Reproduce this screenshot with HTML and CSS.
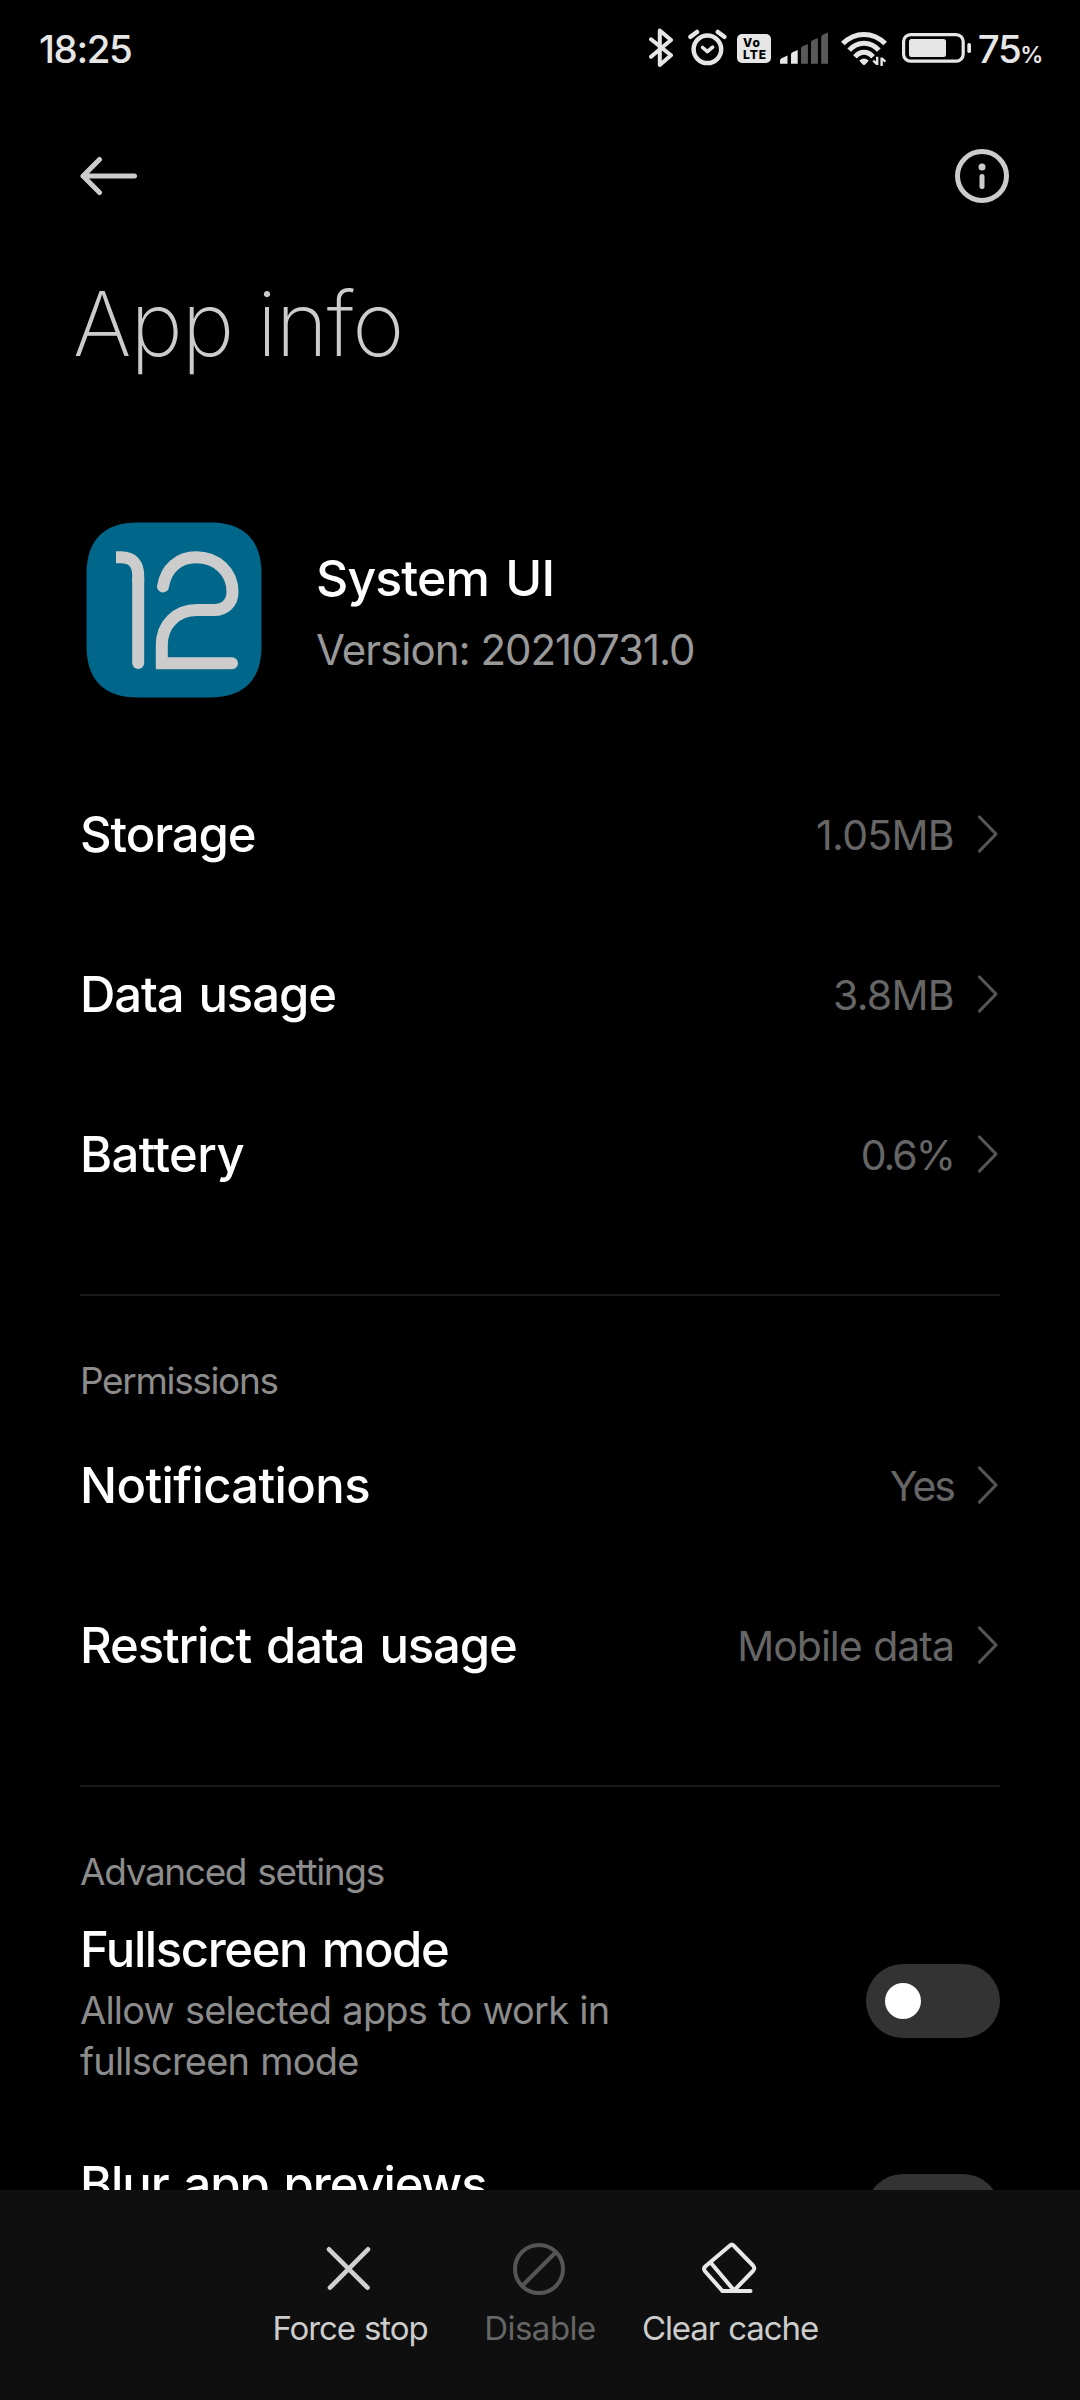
FILE: index.html
```html
<!DOCTYPE html>
<html lang="en">
<head>
    <meta charset="UTF-8">
    <meta name="viewport" content="width=device-width, initial-scale=1.0">
    <title>App info</title>
    <link rel="stylesheet" href="styles.css">
</head>
<body>
    <div class="screen">
        <div class="status-bar">
            <span class="clock">18:25</span>
            <div class="status-icons">
                <svg class="bluetooth" width="24" height="48" viewBox="0 0 24 48">
                    <path d="M2 15.3 L22 31.3 L10.8 41 V6.5 L22 16 L2 32.7" fill="none" stroke="#e6e6e6" stroke-width="4" stroke-linecap="round" stroke-linejoin="round"/>
                </svg>
                <svg class="alarm" width="39" height="48" viewBox="0 0 39 48" fill="none" stroke="#e6e6e6" stroke-width="4.5" stroke-linecap="round">
                    <circle cx="19.4" cy="25.3" r="13.8"/>
                    <path d="M2.5 12.8 L9 8 M29.8 8 L36.3 12.8"/>
                    <path d="M14.6 23.5 L19.4 27.6 L24.6 23.2" stroke-width="3.6" stroke-linejoin="round"/>
                </svg>
                <svg class="volte" width="34" height="48" viewBox="0 0 34 48">
                    <rect x="0" y="10" width="34" height="29" rx="5" fill="#e6e6e6"/>
                    <text x="6" y="22.8" textLength="17">Vo</text>
                    <text x="6" y="35.4" textLength="23">LTE</text>
                </svg>
                <svg class="signal" width="48" height="48" viewBox="0 0 48 48">
                    <path d="M0 39.7 V36.5 Q0 35 1.5 34.3 L7.5 31.5 V39.7 Z M11 39.7 V30.5 Q11 29 12.5 28.2 L17.7 26 V39.7 Z" fill="#e6e6e6"/>
                    <path d="M21 39.7 V24.5 Q21 23 22.5 22.2 L27.9 20 V39.7 Z M31 39.7 V18.5 Q31 17 32.5 16.2 L37.9 14 V39.7 Z M41.2 39.7 V13 Q41.2 11.5 42.7 10.7 L48 8.5 V39.7 Z" fill="#595959"/>
                </svg>
                <svg class="wifi" width="46" height="48" viewBox="0 0 46 48" fill="none" stroke="#e6e6e6" stroke-width="5">
                    <path d="M1.8 19.6 Q11 10.4 23 10.4 Q35 10.4 44.2 19.6"/>
                    <path d="M8.2 26.2 Q14.5 19.2 23 19.2 Q31.5 19.2 37.8 26.2"/>
                    <path d="M14 32.8 Q18 28.3 23 28.3 Q28 28.3 32 32.8"/>
                    <path d="M18.3 36.8 Q23 32.4 27.7 36.8 L24.2 40.6 Q23 41.6 21.8 40.6 Z" fill="#e6e6e6" stroke="none"/>
                    <path d="M36.2 32.8 V41 M36 40 L32.2 36.6 M40.6 42 V33.6 M40.8 34.4 L44.4 37.6" stroke-width="2.4"/>
                </svg>
                <svg class="battery" width="70" height="48" viewBox="0 0 70 48">
                    <rect x="1.6" y="10.6" width="59.6" height="26.6" rx="7" fill="none" stroke="#e6e6e6" stroke-width="3.2"/>
                    <rect x="7" y="15" width="37" height="18" rx="2.5" fill="#e6e6e6"/>
                    <rect x="65.3" y="19" width="3.7" height="10" rx="1.8" fill="#e6e6e6"/>
                </svg>
                <span class="level">75<span class="percent">%</span></span>
            </div>
        </div>

        <div class="toolbar">
            <svg width="58" height="54" viewBox="0 0 58 54" fill="none" stroke="#cccccc" stroke-width="5" stroke-linecap="round" stroke-linejoin="round">
                <path d="M19.5 10.5 L3 27 L19.5 43.5 M3 27 H54.5"/>
            </svg>
            <svg width="54" height="54" viewBox="0 0 54 54">
                <circle cx="27" cy="27" r="24.5" fill="none" stroke="#cccccc" stroke-width="5"/>
                <circle cx="27" cy="18" r="3.5" fill="#cccccc"/>
                <rect x="24.5" y="25" width="5" height="15" rx="2.5" fill="#cccccc"/>
            </svg>
        </div>

        <h1>App info</h1>

        <div class="app">
            <svg class="app-icon" width="176" height="176" viewBox="0 0 176 176">
                <path d="M0.5 52 C0.5 18 18 0.5 52 0.5 H124 C158 0.5 175.5 18 175.5 52 V124 C175.5 158 158 175.5 124 175.5 H52 C18 175.5 0.5 158 0.5 124 Z" fill="#00668a"/>
                <g fill="none" stroke="#cccccc" stroke-width="12">
                    <path d="M30 35.3 H35 Q52.2 35.3 52.2 54 V60"/>
                    <path d="M52.2 58 V141" stroke-linecap="round"/>
                    <path d="M77 64.5 C80 46 93 35.3 110 35.3 C131 35.3 146.5 50 146.5 70 C146.5 81 139 88 128 88 H111 C90 88 75.8 103 75.8 123 V141.2 H146" stroke-linecap="round"/>
                </g>
            </svg>
            <div class="app-text">
                <div class="app-name">System UI</div>
                <div class="app-version">Version: 20210731.0</div>
            </div>
        </div>

        <div class="section">
            <div class="row">
                <span class="name">Storage</span>
                <span class="value wide">1.05MB</span>
                <svg class="chevron" width="22" height="40" viewBox="0 0 22 40"><path d="M2.5 3 L19 20 L2.5 37"/></svg>
            </div>
            <div class="row">
                <span class="name">Data usage</span>
                <span class="value wide">3.8MB</span>
                <svg class="chevron" width="22" height="40" viewBox="0 0 22 40"><path d="M2.5 3 L19 20 L2.5 37"/></svg>
            </div>
            <div class="row">
                <span class="name loose">Battery</span>
                <span class="value tight">0.6%</span>
                <svg class="chevron" width="22" height="40" viewBox="0 0 22 40"><path d="M2.5 3 L19 20 L2.5 37"/></svg>
            </div>
        </div>

        <div class="section">
            <h2>Permissions</h2>
            <div class="row">
                <span class="name loose">Notifications</span>
                <span class="value tight">Yes</span>
                <svg class="chevron" width="22" height="40" viewBox="0 0 22 40"><path d="M2.5 3 L19 20 L2.5 37"/></svg>
            </div>
            <div class="row">
                <span class="name">Restrict data usage</span>
                <span class="value">Mobile data</span>
                <svg class="chevron" width="22" height="40" viewBox="0 0 22 40"><path d="M2.5 3 L19 20 L2.5 37"/></svg>
            </div>
        </div>

        <div class="section last">
            <h2>Advanced settings</h2>
            <div class="row tall">
                <div class="text">
                    <div class="name snug">Fullscreen mode</div>
                    <div class="summary">Allow selected apps to work in<br>fullscreen mode</div>
                </div>
                <div class="toggle"><div class="knob"></div></div>
            </div>
            <div class="row tall">
                <div class="text">
                    <div class="name">Blur app previews</div>
                    <div class="summary">&nbsp;</div>
                </div>
                <div class="toggle"><div class="knob"></div></div>
            </div>
        </div>

        <div class="bottom-bar">
            <div class="action">
                <svg width="60" height="60" viewBox="0 0 60 60" fill="none" stroke="#d0d0d0" stroke-width="4.6" stroke-linecap="round">
                    <path d="M9 10.3 L47.5 48.7 M48 10.3 L10 48.7"/>
                </svg>
                <span>Force stop</span>
            </div>
            <div class="action disabled">
                <svg width="60" height="60" viewBox="0 0 60 60" fill="none" stroke="#555555" stroke-width="4">
                    <circle cx="29" cy="30" r="24"/>
                    <path d="M46 13 L12 47"/>
                </svg>
                <span>Disable</span>
            </div>
            <div class="action">
                <svg width="60" height="60" viewBox="0 0 60 60" fill="none" stroke="#e8e8e8" stroke-width="4" stroke-linecap="round" stroke-linejoin="round">
                    <path d="M33.5 6.5 L53 26.5 Q55.5 29.3 53 32 L33.5 52 H22.5 L5.2 32.5 Q3 29.7 5.2 27.5 L30 6.5 Q31.8 4.8 33.5 6.5 Z"/>
                    <path d="M11 24 L32.5 49.5 M22.5 52 H50.5"/>
                </svg>
                <span>Clear cache</span>
            </div>
        </div>
    </div>
</body>
</html>
```
FILE: styles.css
```css
* {
    box-sizing: border-box;
}

body {
    margin: 0;
    background: #000;
    color: #fff;
    font-family: Inter, Roboto, sans-serif;
}

.screen {
    display: flex;
    flex-direction: column;
    width: 1080px;
    height: 2400px;
    overflow: hidden;
}

svg {
    display: block;
    flex: none;
}

/* status bar */
.status-bar {
    display: flex;
    justify-content: space-between;
    align-items: center;
    height: 96px;
    padding: 0 38px 0 39px;
    color: #e6e6e6;
    flex: none;
}

.clock {
    padding-top: 1px;
    font-size: 38.5px;
    font-weight: 450;
    letter-spacing: -1.4px;
}

.status-icons {
    display: flex;
    align-items: center;
}

.alarm {
    margin-left: 15px;
}

.volte {
    margin-left: 10px;
    font-size: 12px;
    font-weight: 800;
    fill: #000;
}

.signal {
    margin-left: 9px;
}

.wifi {
    margin-left: 13px;
}

.battery {
    margin-left: 15px;
}

.level {
    margin-left: 6px;
    padding-top: 1px;
    font-size: 38.5px;
    font-weight: 450;
    letter-spacing: -1.4px;
}

.percent {
    font-size: 23px;
    font-weight: 600;
}

/* header */
.toolbar {
    display: flex;
    justify-content: space-between;
    align-items: center;
    height: 160px;
    padding: 0 71px 0 80px;
    flex: none;
}

h1 {
    margin: 13px 0 143px;
    padding-left: 73px;
    font-size: 89px;
    font-weight: 250;
    line-height: 110px;
    letter-spacing: -1.2px;
    color: #ccc;
    flex: none;
}

.app {
    display: flex;
    align-items: center;
    height: 176px;
    margin-bottom: 56px;
    padding-left: 86px;
    flex: none;
}

.app-text {
    padding: 8px 0 0 54px;
}

.app-name {
    font-size: 50px;
    font-weight: 500;
    line-height: 72px;
    letter-spacing: -0.9px;
    word-spacing: 4px;
}

.app-version {
    font-size: 42px;
    line-height: 72px;
    letter-spacing: -1px;
    color: #999;
}

/* preference list */
.section {
    margin: 0 80px;
    padding-bottom: 60px;
    border-bottom: 2px solid #1a1a1a;
    flex: none;
}

.section.last {
    height: 403px;
    padding-bottom: 0;
    border-bottom: none;
    overflow: hidden;
}

h2 {
    margin: 0;
    padding-top: 60px;
    font-size: 37px;
    font-weight: 400;
    line-height: 49px;
    letter-spacing: -1.35px;
    word-spacing: 2px;
    color: #8c8c8c;
}

.row {
    display: flex;
    align-items: center;
    height: 160px;
}

.row.tall {
    height: 210px;
}

.name {
    flex: 1;
    padding-top: 2px;
    font-size: 49px;
    font-weight: 500;
    line-height: 64px;
    letter-spacing: -1.1px;
    word-spacing: 3px;
}

.name.loose {
    letter-spacing: -0.6px;
}

.name.snug {
    letter-spacing: -1.4px;
}

.text {
    flex: 1;
}

.text .name {
    margin-bottom: -2px;
}

.summary {
    margin-top: 5px;
    font-size: 38px;
    line-height: 51px;
    letter-spacing: -0.8px;
    word-spacing: 1.2px;
    color: #8c8c8c;
}

.value {
    padding-top: 1px;
    font-size: 41px;
    letter-spacing: -1px;
    word-spacing: 1px;
    color: #666;
}

.value.wide {
    letter-spacing: -0.7px;
}

.value.tight {
    letter-spacing: -2px;
}

.chevron {
    margin: 0 1px 0 23px;
    fill: none;
    stroke: #555;
    stroke-width: 3.2;
    stroke-linecap: round;
    stroke-linejoin: round;
}

.toggle {
    display: flex;
    align-items: center;
    width: 134px;
    height: 74px;
    padding-left: 19px;
    border-radius: 37px;
    background: #333;
}

.knob {
    width: 36px;
    height: 36px;
    border-radius: 50%;
    background: #fff;
}

/* bottom actions */
.bottom-bar {
    display: flex;
    justify-content: center;
    height: 210px;
    padding-top: 49px;
    background: #0f0f0f;
    flex: none;
}

.action {
    display: flex;
    flex-direction: column;
    align-items: center;
    gap: 7px;
    width: 190px;
    font-size: 33px;
    line-height: 44px;
    letter-spacing: -1.1px;
    word-spacing: 1px;
    color: #ccc;
    white-space: nowrap;
}

.action.disabled {
    letter-spacing: -0.5px;
    color: #666;
}
```
